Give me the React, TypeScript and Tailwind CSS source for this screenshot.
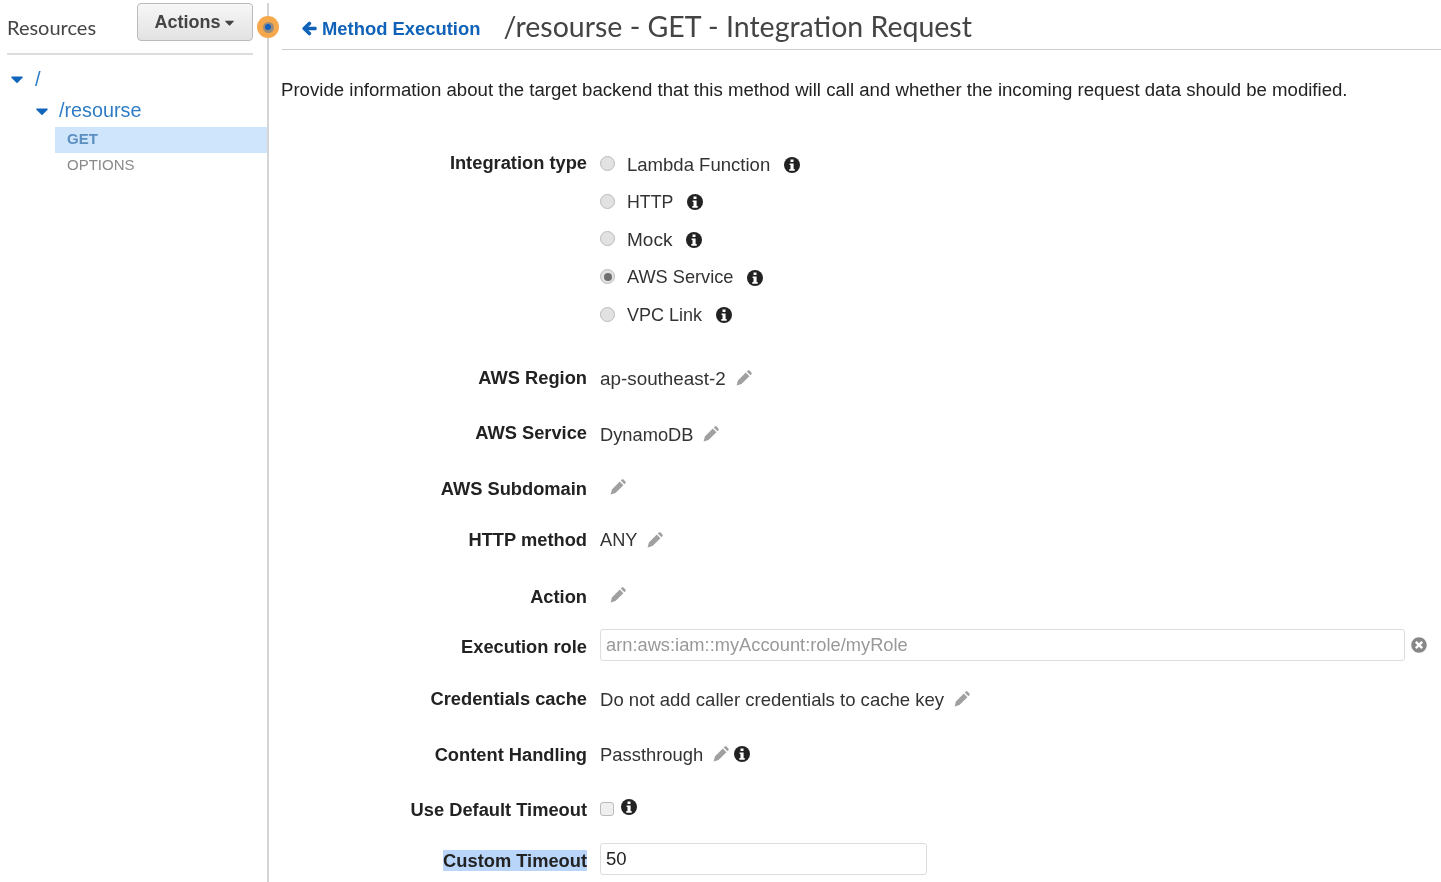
import { FaArrowLeft, FaCaretDown, FaTimesCircle } from "react-icons/fa";

const Info = () => (
  <svg viewBox="0 0 16 16" className="size-[16px] shrink-0">
    <circle cx="8" cy="8" r="8" fill="#222" />
    <path fill="#fff" d="M6.5 2.6h3v2.5h-3zM5.6 6.4h4v5.6h1.1v1.7H5.3V12h1.2V8.1h-.9z" />
  </svg>
);
const Pencil = () => (
  <svg viewBox="0 0 16 16" className="size-[16px] shrink-0">
    <path fill="#a0a0a0" d="M.6 15.4l1.3-4.9 7.9-7.9 3.6 3.6-7.9 7.9zM10.8 1.6l1-1c.5-.5 1.2-.5 1.7 0l1.9 1.9c.5.5.5 1.2 0 1.7l-1 1z" />
  </svg>
);
const Value = ({ children, className }: { children: React.ReactNode; className?: string }) => (
  <span className={`mt-[2px] ${className ?? ""}`}>{children}</span>
);

function Radio({ label, checked, textClass }: { label: string; checked?: boolean; textClass: string }) {
  return (
    <div className="flex h-[37.6px] items-center">
      <span className="flex size-[15px] items-center justify-center rounded-full border border-[#bbb] bg-[#e2e2e2]">
        {checked && <span className="size-[8px] rounded-full bg-[#6f6f6f]" />}
      </span>
      <span className={`ml-[12px] text-[#333] ${textClass}`}>{label}</span>
      <span className="mt-[2px]"><Info /></span>
    </div>
  );
}

function Row({ label, className, labelClass, children }: { label: React.ReactNode; className: string; labelClass?: string; children?: React.ReactNode }) {
  return (
    <div className={`flex h-[34px] items-center ${className}`}>
      <div className={`w-[318px] shrink-0 text-right text-[18.3px] font-bold text-[#222] ${labelClass ?? ""}`}>{label}</div>
      <div className="ml-[13px] flex min-w-0 flex-1 items-center text-[#333]">{children}</div>
    </div>
  );
}

export default function App() {
  return (
    <div className="flex h-[882px] w-[1441px] overflow-hidden bg-white text-[18.55px] blur-[0.35px] font-['Liberation_Sans',Arial,sans-serif]">
      <aside className="relative mt-[3px] w-[269px] shrink-0 border-r-2 border-[#d5d5d5]">
        <div className="ml-[7px] mr-[14px] flex h-[52px] items-start justify-between border-b-2 border-[#ddd]">
          <span className="mt-[9px] font-['Lato',sans-serif] text-[20px] text-[#444]">Resources</span>
          <button className="flex h-[38px] w-[116px] items-center justify-center rounded-[4px] border border-[#bbb] bg-gradient-to-b from-[#f7f7f7] to-[#e2e2e2] pl-[1px] text-[18px] font-bold text-[#444]">
            Actions
            <FaCaretDown className="ml-[1px] text-[15px]" />
          </button>
        </div>
        <div className="mt-[11px] flex h-[26px] items-center pl-[7px]">
          <FaCaretDown className="text-[20px] text-[#1166bb]" />
          <span className="ml-[8px] text-[20px] text-[#2d7cc4]">/</span>
        </div>
        <div className="mt-[5px] flex h-[28px] items-center pl-[32px]">
          <FaCaretDown className="text-[20px] text-[#1166bb]" />
          <span className="ml-[7px] text-[19.8px] text-[#2d7cc4]">/resourse</span>
        </div>
        <div className="ml-[55px] mt-[2px] flex h-[26px] items-center bg-[#cfe5fb] pb-[2px] pl-[12px] text-[15px] font-bold text-[#5b8fc0]">GET</div>
        <div className="ml-[55px] flex h-[26px] items-center pb-[2px] pl-[12px] text-[15px] text-[#8a8a8a]">OPTIONS</div>
        <span className="absolute left-[257px] top-[13px] flex size-[22px] items-center justify-center rounded-full bg-[#f5a84c]">
          <span className="flex size-[11px] items-center justify-center rounded-full bg-[#9a8d80]">
            <span className="size-[6px] rounded-full bg-[#1560bd]" />
          </span>
        </span>
      </aside>
      <main className="min-w-0 flex-1">
        <header className="ml-[13px] flex h-[50px] items-center border-b border-[#ccc] pl-[20px]">
          <FaArrowLeft className="mt-[8px] stroke-[#0f62b8] stroke-[40] text-[15px] text-[#0f62b8]" />
          <span className="ml-[5px] mt-[8px] text-[18.4px] font-bold text-[#0f62b8]">Method Execution</span>
          <h1 className="ml-[23px] mt-[4px] font-['Lato',sans-serif] text-[28.5px] text-[#444]">/resourse - GET - Integration Request</h1>
        </header>
        <p className="ml-[12px] mt-[27px] text-[18.62px] leading-[26px] text-[#222]">
          Provide information about the target backend that this method will call and whether the incoming request data should be modified.
        </p>
        <div className="mt-[42px] flex">
          <div className="mt-[4px] w-[318px] shrink-0 text-right text-[18.3px] font-bold text-[#222]">Integration type</div>
          <div className="ml-[13px]">
            <Radio label="Lambda Function" textClass="mr-[14px] mt-[2px]" />
            <Radio label="HTTP" textClass="mr-[14px] mt-[2px] text-[17.8px]" />
            <Radio label="Mock" textClass="mr-[14px] mt-[2px] text-[19px]" />
            <Radio label="AWS Service" checked textClass="mr-[14px] mt-[2px] text-[18.2px]" />
            <Radio label="VPC Link" textClass="mr-[14px] mt-[2px] text-[18px]" />
          </div>
        </div>
        <Row label="AWS Region" className="mt-[28px]">
          <Value className="text-[18.85px]">ap-southeast-2</Value><span className="ml-[10px]"><Pencil /></span>
        </Row>
        <Row label="AWS Service" className="mt-[22px]" labelClass="mb-[2px]">
          <Value className="text-[18.3px]">DynamoDB</Value><span className="ml-[10px]"><Pencil /></span>
        </Row>
        <Row label="AWS Subdomain" className="mt-[19px]" labelClass="mt-[3px]">
          <span className="ml-[10px]"><Pencil /></span>
        </Row>
        <Row label="HTTP method" className="mt-[19px]" labelClass="mb-[1px]">
          <Value className="text-[18.2px]">ANY</Value><span className="ml-[10px]"><Pencil /></span>
        </Row>
        <Row label="Action" className="mt-[21px]" labelClass="mt-[3px]">
          <span className="ml-[10px]"><Pencil /></span>
        </Row>
        <Row label="Execution role" className="mt-[16px]" labelClass="mt-[3px]">
          <div className="flex h-[32px] w-[805px] items-center rounded-[3px] border border-[#ddd] pl-[5px] text-[18.3px] text-[#999]">arn:aws:iam::myAccount:role/myRole</div>
          <FaTimesCircle className="ml-[6px] text-[16px] text-[#888]" />
        </Row>
        <Row label="Credentials cache" className="mt-[20px]">
          <Value>Do not add caller credentials to cache key</Value><span className="ml-[10px]"><Pencil /></span>
        </Row>
        <Row label="Content Handling" className="mt-[21px]" labelClass="mt-[1px]">
          <Value className="text-[18.4px]">Passthrough</Value><span className="ml-[10px]"><Pencil /></span>
          <span className="ml-[5px]"><Info /></span>
        </Row>
        <Row label="Use Default Timeout" className="mt-[21px]" labelClass="mt-[1px]">
          <span className="size-[14px] rounded-[3px] border border-[#bbb] bg-[#efefef]" />
          <span className="ml-[7px] -mt-[3px]"><Info /></span>
        </Row>
        <Row label={<span className="bg-[#b9d6fa]">Custom Timeout</span>} className="mt-[16px]" labelClass="mt-[3px]">
          <div className="flex h-[32px] w-[327px] items-center rounded-[3px] border border-[#ddd] pl-[5px] text-[#222]">50</div>
        </Row>
      </main>
    </div>
  );
}
